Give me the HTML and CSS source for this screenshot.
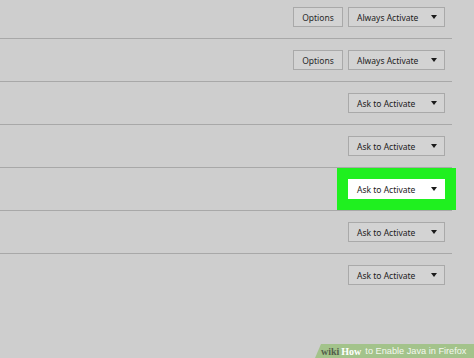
FILE: index.html
```html
<!DOCTYPE html>
<html>
<head>
<meta charset="utf-8">
<link rel="stylesheet" href="styles.css">
</head>
<body>
<div class="list">
  <div class="row">
    <button class="btn">Options</button>
    <div class="select"><span>Always Activate</span><i class="caret"></i></div>
  </div>
  <div class="row">
    <button class="btn">Options</button>
    <div class="select"><span>Always Activate</span><i class="caret"></i></div>
  </div>
  <div class="row">
    <div class="select"><span>Ask to Activate</span><i class="caret"></i></div>
  </div>
  <div class="row">
    <div class="select"><span>Ask to Activate</span><i class="caret"></i></div>
  </div>
  <div class="row">
    <div class="select highlight"><span>Ask to Activate</span><i class="caret"></i></div>
  </div>
  <div class="row">
    <div class="select"><span>Ask to Activate</span><i class="caret"></i></div>
  </div>
  <div class="row last">
    <div class="select"><span>Ask to Activate</span><i class="caret"></i></div>
  </div>
</div>
<div class="watermark"><span class="wiki">wiki</span><span class="how">How</span><span class="title">to Enable Java in Firefox</span></div>
</body>
</html>
```
FILE: styles.css
```css
html, body {
  margin: 0;
  padding: 0;
  height: 100%;
  background: #cecece;
  overflow: hidden;
}
body {
  position: relative;
  font-family: "Noto Sans", "Open Sans", sans-serif;
  color: #1c1c1c;
}
.list {
  width: 452px;
  margin-top: -4px;
}
.row {
  height: 42px;
  display: flex;
  align-items: center;
  justify-content: flex-end;
  gap: 5px;
  padding-right: 7px;
  border-bottom: 1px solid #a8a8a8;
}
.row.last {
  border-bottom: none;
}
.btn {
  box-sizing: border-box;
  width: 50px;
  height: 20px;
  padding: 0;
  margin: 0;
  font: inherit;
  font-size: 8.5px;
  color: #2a2a2a;
  background: #d3d3d3;
  border: 1px solid #a9a9a9;
}
.select {
  box-sizing: border-box;
  width: 97px;
  height: 20px;
  display: flex;
  align-items: center;
  justify-content: space-between;
  padding: 0 7px 0 8px;
  font-size: 8.5px;
  background: #d3d3d3;
  border: 1px solid #a9a9a9;
}
.select.highlight {
  background: #ffffff;
  border-color: #ffffff;
  box-shadow: 0 0 0 11px #1ff01f;
  position: relative;
}
.caret {
  width: 0;
  height: 0;
  border-left: 3px solid transparent;
  border-right: 3px solid transparent;
  border-top: 4px solid #1a1a1a;
}
.watermark {
  position: absolute;
  right: 0;
  bottom: 0;
  width: 159px;
  height: 14px;
  padding-left: 6px;
  box-sizing: border-box;
  background: #a3c38b;
  clip-path: polygon(6px 0, 100% 0, 100% 100%, 0 100%);
  display: flex;
  align-items: center;
  white-space: nowrap;
  overflow: hidden;
}
.wiki {
  font-family: "Liberation Serif", serif;
  font-weight: bold;
  font-size: 10px;
  color: #535e4b;
}
.how {
  font-family: "Liberation Serif", serif;
  font-weight: bold;
  font-size: 10px;
  color: #ffffff;
  margin-left: 2px;
}
.title {
  font-family: "Liberation Sans", sans-serif;
  font-size: 9.2px;
  color: #f4f8f0;
  margin-left: 4px;
}
```
